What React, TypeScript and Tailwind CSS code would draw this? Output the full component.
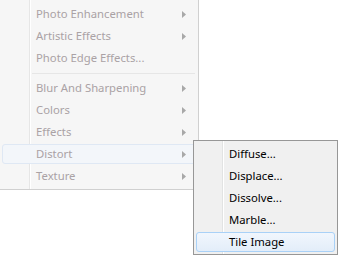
const mainItems: { label: string; arrow?: boolean; sep?: boolean; hot?: boolean }[] = [
  { label: "Photo Enhancement", arrow: true },
  { label: "Artistic Effects", arrow: true },
  { label: "Photo Edge Effects..." },
  { label: "", sep: true },
  { label: "Blur And Sharpening", arrow: true },
  { label: "Colors", arrow: true },
  { label: "Effects", arrow: true },
  { label: "Distort", arrow: true, hot: true },
  { label: "Texture", arrow: true },
];

const subItems = ["Diffuse...", "Displace...", "Dissolve...", "Marble...", "Tile Image"];

function Arrow() {
  return (
    <svg width="4" height="7" viewBox="0 0 4 7" className="shrink-0">
      <path d="M0 0 L4 3.5 L0 7 Z" fill="#a8a8a8" />
    </svg>
  );
}

export default function App() {
  return (
    <div
      className="relative w-[338px] h-[256px] bg-white overflow-hidden text-[11.3px]"
      style={{ fontFamily: '"Noto Sans", "Open Sans", sans-serif' }}
    >
      {/* main menu, gutter drawn as background stripes */}
      <div className="w-[199px] h-[190px] border-r border-b border-[#d0d0d0] pt-[3px] bg-[linear-gradient(to_right,#f6f6f6_29px,#e6e6e6_29px,#e6e6e6_30px,#ffffff_30px,#ffffff_31px,#f6f6f6_31px)]">
        {mainItems.map((it, i) =>
          it.sep ? (
            <div key={i} className="h-[8px] flex items-center pl-[32px] pr-[3px]">
              <div className="w-full h-px bg-[#e6e6e6]" />
            </div>
          ) : (
            <div key={i} className="h-[22px] px-[2px] py-px">
              <div
                className={
                  "h-full flex items-center pl-[33px] pr-[9px] rounded-[3px] border " +
                  (it.hot ? "border-[#dfe8f4] bg-[#f3f6fa]" : "border-transparent")
                }
              >
                <span className="flex-1 text-[#aaa2a5] leading-none">{it.label}</span>
                {it.arrow && <Arrow />}
              </div>
            </div>
          )
        )}
      </div>

      {/* submenu popup */}
      <div className="absolute left-[193px] top-[140px] w-[145px] h-[115px] border border-[#979797] pt-[2px] bg-[linear-gradient(to_right,#f0f0f0_28px,#e2e3e3_28px,#e2e3e3_29px,#ffffff_29px,#ffffff_30px,#f0f0f0_30px)]">
        {subItems.map((s, i) => (
          <div key={i} className="h-[22px] px-[2px] py-px">
            <div
              className={
                "h-full flex items-center pl-[32px] rounded-[3px] border " +
                (i === 4
                  ? "border-[#a9d1f7] bg-gradient-to-b from-[#f1f6fd] to-[#e3edf9]"
                  : "border-transparent")
              }
            >
              <span className="text-black leading-none">{s}</span>
            </div>
          </div>
        ))}
      </div>
    </div>
  );
}
